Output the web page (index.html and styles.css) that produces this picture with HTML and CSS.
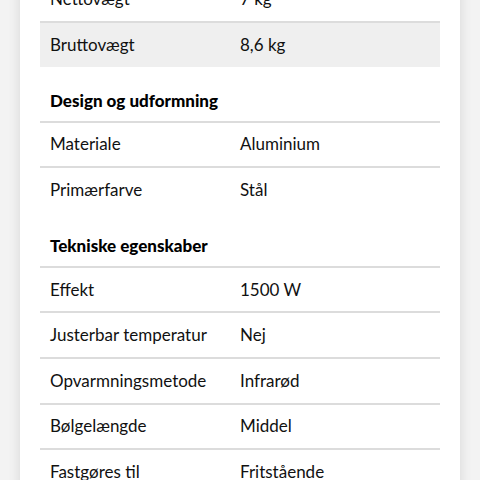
FILE: index.html
```html
<!DOCTYPE html>
<html lang="da">
<head>
<meta charset="utf-8">
<link rel="stylesheet" href="styles.css">
</head>
<body>
<div class="page">
  <div class="panel">
    <div class="section first">
      <div class="row"><div class="key">Nettovægt</div><div class="val">7 kg</div></div>
      <div class="row alt"><div class="key">Bruttovægt</div><div class="val">8,6 kg</div></div>
    </div>
    <div class="section">
      <h3 class="title">Design og udformning</h3>
      <div class="row"><div class="key">Materiale</div><div class="val">Aluminium</div></div>
      <div class="row"><div class="key">Primærfarve</div><div class="val">Stål</div></div>
    </div>
    <div class="section">
      <h3 class="title">Tekniske egenskaber</h3>
      <div class="row"><div class="key">Effekt</div><div class="val">1500 W</div></div>
      <div class="row"><div class="key">Justerbar temperatur</div><div class="val">Nej</div></div>
      <div class="row"><div class="key">Opvarmningsmetode</div><div class="val">Infrarød</div></div>
      <div class="row"><div class="key">Bølgelængde</div><div class="val">Middel</div></div>
      <div class="row"><div class="key">Fastgøres til</div><div class="val">Fritstående</div></div>
    </div>
  </div>
</div>
</body>
</html>
```
FILE: styles.css
```css
html, body {
  margin: 0;
  padding: 0;
  height: 480px;
  overflow: hidden;
  background: #f3f3f3;
}
body {
  font-family: Lato, "Open Sans", sans-serif;
  color: #111;
}
.page {
  padding: 0 20px;
}
.panel {
  background: #fff;
  box-shadow: 0 0 12px rgba(0, 0, 0, 0.12);
  padding: 0 20px 40px;
  margin-top: -24.5px;
}
.title {
  margin: 0;
  padding: 24px 10px 11px;
  font-size: 17px;
  font-weight: 900;
  line-height: 19px;
  color: #000;
}
.row {
  display: grid;
  grid-template-columns: 190px 1fr;
  border-top: 2px solid #dcdcdc;
  box-sizing: border-box;
  height: 45.6px;
  align-items: center;
  padding: 0 10px;
  font-size: 17px;
}
.row.alt {
  background: #efefef;
}
.key, .val {
  line-height: 20px;
}
```
